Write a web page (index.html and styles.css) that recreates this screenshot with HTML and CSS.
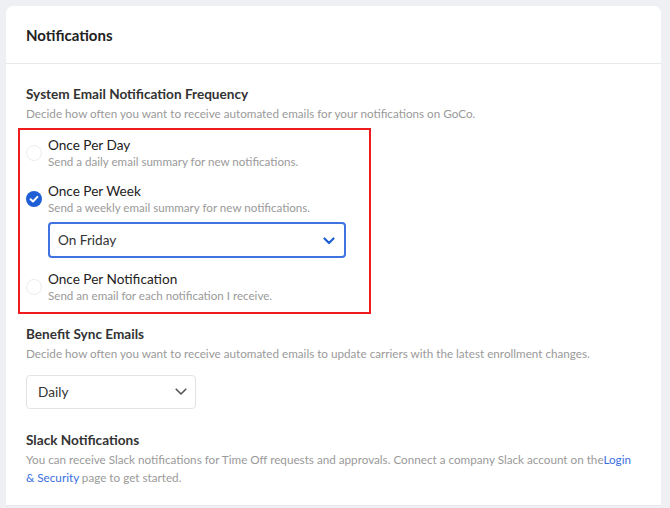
FILE: index.html
```html
<!DOCTYPE html>
<html>
<head>
<meta charset="utf-8">
<link rel="stylesheet" href="styles.css">
</head>
<body>
<div class="card">
  <div class="card-header"><h1>Notifications</h1></div>
  <div class="card-body">
    <section class="section">
      <h2>System Email Notification Frequency</h2>
      <p class="desc">Decide how often you want to receive automated emails for your notifications on GoCo.</p>
      <div class="highlight">
        <div class="option">
          <span class="radio"></span>
          <div class="option-text">
            <div class="label">Once Per Day</div>
            <div class="sub">Send a daily email summary for new notifications.</div>
          </div>
        </div>
        <div class="option">
          <span class="radio checked">
            <svg viewBox="0 0 16 16" width="16" height="16"><circle cx="8" cy="8" r="8" fill="#1f5fd6"/><path d="M4.6 8.3 L7 10.5 L11.4 5.9" fill="none" stroke="#fff" stroke-width="2" stroke-linecap="round" stroke-linejoin="round"/></svg>
          </span>
          <div class="option-text">
            <div class="label">Once Per Week</div>
            <div class="sub">Send a weekly email summary for new notifications.</div>
            <div class="select select-active">
              <span>On Friday</span>
              <svg viewBox="0 0 12 8" width="12" height="8"><path d="M1.5 1.5 L6 6 L10.5 1.5" fill="none" stroke="#1f5fd6" stroke-width="2.2" stroke-linecap="round" stroke-linejoin="round"/></svg>
            </div>
          </div>
        </div>
        <div class="option">
          <span class="radio"></span>
          <div class="option-text">
            <div class="label">Once Per Notification</div>
            <div class="sub">Send an email for each notification I receive.</div>
          </div>
        </div>
      </div>
    </section>
    <section class="section">
      <h2>Benefit Sync Emails</h2>
      <p class="desc">Decide how often you want to receive automated emails to update carriers with the latest enrollment changes.</p>
      <div class="select select-plain">
        <span>Daily</span>
        <svg viewBox="0 0 12 8" width="12" height="8"><path d="M1.2 1.2 L6 6 L10.8 1.2" fill="none" stroke="#555" stroke-width="1.6" stroke-linecap="round" stroke-linejoin="round"/></svg>
      </div>
    </section>
    <section class="section">
      <h2>Slack Notifications</h2>
      <p class="desc slack">You can receive Slack notifications for Time Off requests and approvals. Connect a company Slack account on the<a href="#">Login &amp; Security</a> page to get started.</p>
    </section>
  </div>
</div>
</body>
</html>
```

FILE: styles.css
```css
* { box-sizing: border-box; }
html, body { margin: 0; padding: 0; }
body {
  background: #eef0f4;
  font-family: "Lato", "Liberation Sans", sans-serif;
  color: #222;
  padding: 6px 9px 0 6px;
  height: 508px;
  overflow: hidden;
}
.card {
  background: #fff;
  border-radius: 7px 7px 0 0;
  border-bottom: 1px solid #e6e8ec;
  height: 500px;
}
.card-header {
  height: 58px;
  border-bottom: 1px solid #e8e9ec;
  padding: 0 20px;
  display: flex;
  align-items: center;
}
h1 {
  margin: 0;
  font-size: 15px;
  font-weight: 700;
  color: #222;
}
.card-body {
  padding: 21px 20px 0 20px;
}
h2 {
  margin: 0;
  font-size: 13.6px;
  font-weight: 700;
  color: #333;
  line-height: 18px;
}
.desc {
  margin: 1px 0 0 0;
  font-size: 11.7px;
  line-height: 18px;
  color: #9a9a9a;
}
.highlight {
  margin: 6px 0 0 -8px;
  width: 353px;
  border: 2px solid #ee1c1c;
  padding: 6px 0 8px 6px;
}
.option {
  display: flex;
  gap: 6px;
  margin-bottom: 12px;
}
.option:last-child { margin-bottom: 0; }
.radio {
  flex: none;
  width: 16px;
  height: 16px;
  margin-top: 9px;
  border-radius: 50%;
  border: 1px solid #ececec;
}
.radio.checked { border: none; }
.radio.checked svg { display: block; }
.label {
  font-size: 13.6px;
  line-height: 18px;
  color: #222;
}
.sub {
  font-size: 11.6px;
  line-height: 16px;
  color: #9a9a9a;
}
.select {
  display: flex;
  align-items: center;
  justify-content: space-between;
  border-radius: 4px;
  font-size: 13.6px;
  color: #333;
}
.select-active {
  margin-top: 6px;
  width: 298px;
  height: 36px;
  border: 2px solid #3f73e0;
  padding: 0 9px 0 8px;
}
.select-active svg { margin-top: 1px; }
.select-plain {
  margin-top: 13px;
  width: 170px;
  height: 34px;
  border: 1px solid #e3e3e3;
  padding: 0 8px 0 11px;
}
.section { margin-bottom: 11px; }
.section:nth-child(2) { margin-bottom: 22px; }
.slack a {
  color: #3b6fe0;
  text-decoration: none;
}
```
